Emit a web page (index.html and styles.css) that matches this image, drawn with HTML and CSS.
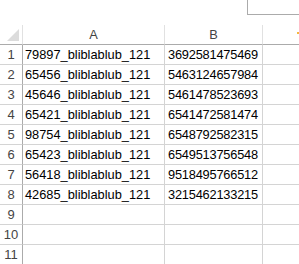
FILE: index.html
```html
<!DOCTYPE html>
<html>
<head>
<meta charset="utf-8">
<link rel="stylesheet" href="styles.css">
</head>
<body>
<div class="sheet">
  <div class="topbar"><div class="namebox"></div></div>
  <div class="grid">
    <div class="corner"><span class="tri"></span></div><div class="colhead">A</div><div class="colhead">B</div><div class="colhead last"><span class="mark"></span></div>
    <div class="rowhead">1</div><div class="cell">79897_bliblablub_121</div><div class="cell">3692581475469</div><div class="cell"></div>
    <div class="rowhead">2</div><div class="cell">65456_bliblablub_121</div><div class="cell">5463124657984</div><div class="cell"></div>
    <div class="rowhead">3</div><div class="cell">45646_bliblablub_121</div><div class="cell">5461478523693</div><div class="cell"></div>
    <div class="rowhead">4</div><div class="cell">65421_bliblablub_121</div><div class="cell">6541472581474</div><div class="cell"></div>
    <div class="rowhead">5</div><div class="cell">98754_bliblablub_121</div><div class="cell">6548792582315</div><div class="cell"></div>
    <div class="rowhead">6</div><div class="cell">65423_bliblablub_121</div><div class="cell">6549513756548</div><div class="cell"></div>
    <div class="rowhead">7</div><div class="cell">56418_bliblablub_121</div><div class="cell">9518495766512</div><div class="cell"></div>
    <div class="rowhead">8</div><div class="cell">42685_bliblablub_121</div><div class="cell">3215462133215</div><div class="cell"></div>
    <div class="rowhead">9</div><div class="cell"></div><div class="cell"></div><div class="cell"></div>
    <div class="rowhead">10</div><div class="cell"></div><div class="cell"></div><div class="cell"></div>
    <div class="rowhead">11</div><div class="cell"></div><div class="cell"></div><div class="cell"></div>
  </div>
</div>
</body>
</html>
```
FILE: styles.css
```css
html, body {
  margin: 0;
  padding: 0;
  background: #ffffff;
}
.sheet {
  width: 299px;
  height: 264px;
  overflow: hidden;
  font-family: "Liberation Sans", Arial, sans-serif;
  font-size: 12.8px;
  color: #000;
}
.topbar {
  height: 25px;
  display: flex;
  justify-content: flex-end;
  align-items: flex-start;
}
.namebox {
  width: 52px;
  height: 15px;
  box-sizing: border-box;
  border-left: 1px solid #ababab;
  border-bottom: 1px solid #ababab;
}
.grid {
  display: grid;
  grid-template-columns: 23px 142px 98px 60px;
  grid-auto-rows: 20px;
}
.grid > div {
  box-sizing: border-box;
  border-right: 1px solid #d4d4d4;
  border-bottom: 1px solid #d4d4d4;
  white-space: nowrap;
  overflow: hidden;
  line-height: 19px;
}
.corner {
  position: relative;
  border-right: 1px solid #e1e1e1 !important;
  border-bottom: 1px solid #ababab !important;
}
.tri {
  position: absolute;
  left: 7px;
  top: 4px;
  width: 0;
  height: 0;
  border-left: 12px solid transparent;
  border-bottom: 12px solid #dcdcdc;
}
.colhead {
  position: relative;
  text-align: center;
  color: #444;
  font-size: 12.8px;
  border-right: 1px solid #e1e1e1 !important;
  border-bottom: 1px solid #ababab !important;
}
.mark {
  position: absolute;
  left: 34px;
  top: 7px;
  width: 2px;
  height: 2px;
  background: #f5b840;
}
.rowhead {
  text-align: center;
  color: #444;
  font-size: 13px;
  border-right: 1px solid #ababab !important;
}
.cell {
  padding-left: 2px;
}
.grid > .cell:nth-child(4n+3) {
  padding-left: 3px;
  letter-spacing: -0.2px;
}
```
